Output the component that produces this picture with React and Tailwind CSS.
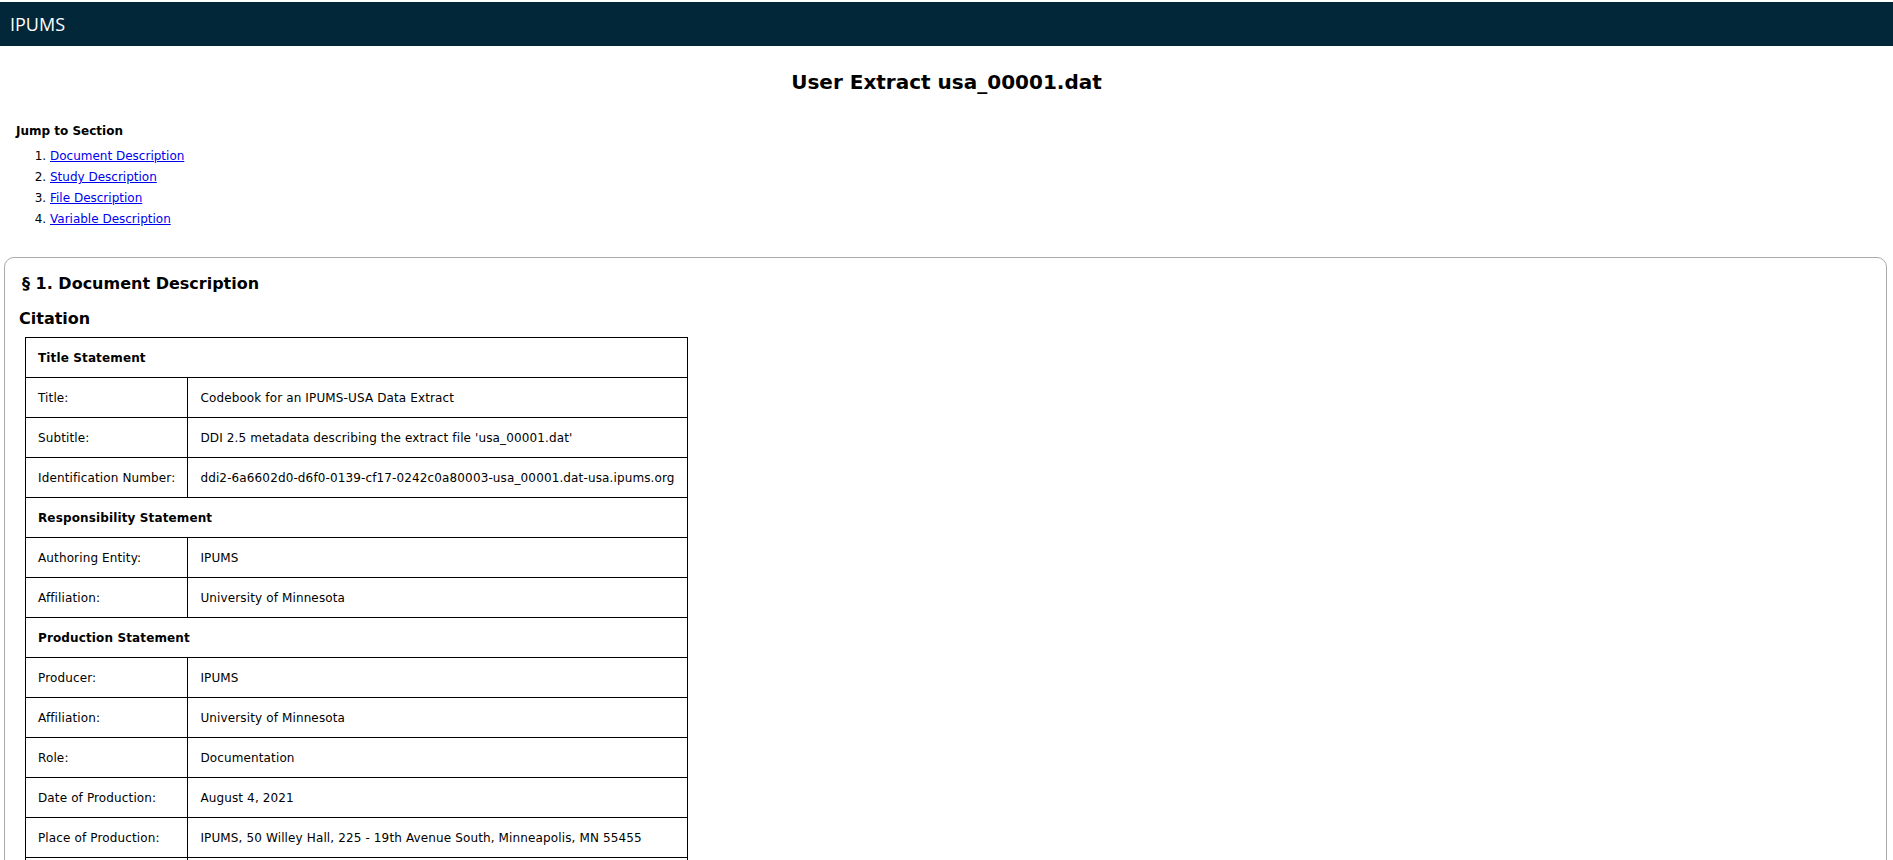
import React from "react";

const rows = [
  { head: "Title Statement" },
  { k: "Title:", v: "Codebook for an IPUMS-USA Data Extract" },
  { k: "Subtitle:", v: "DDI 2.5 metadata describing the extract file 'usa_00001.dat'" },
  { k: "Identification Number:", v: "ddi2-6a6602d0-d6f0-0139-cf17-0242c0a80003-usa_00001.dat-usa.ipums.org" },
  { head: "Responsibility Statement" },
  { k: "Authoring Entity:", v: "IPUMS" },
  { k: "Affiliation:", v: "University of Minnesota" },
  { head: "Production Statement" },
  { k: "Producer:", v: "IPUMS" },
  { k: "Affiliation:", v: "University of Minnesota" },
  { k: "Role:", v: "Documentation" },
  { k: "Date of Production:", v: "August 4, 2021" },
  { k: "Place of Production:", v: "IPUMS, 50 Willey Hall, 225 - 19th Avenue South, Minneapolis, MN 55455" },
  { k: "Copyright:", v: "IPUMS, University of Minnesota" },
  { k: "Software:", v: "IPUMS Extract System" },
];

const links = ["Document Description", "Study Description", "File Description", "Variable Description"];

export default function App() {
  return (
    <div className="min-h-screen bg-white text-black font-['DejaVu_Sans',Verdana,sans-serif] pt-[2px]">
      <header className="h-[44px] bg-[#022739] text-white flex items-center px-[10px] font-['Open_Sans',sans-serif] text-[18px]">
        IPUMS
      </header>
      <h1 className="mt-[24px] text-center font-bold text-[20px] leading-[24px]">User Extract usa_00001.dat</h1>
      <div className="mt-[30px] px-[16px]">
        <div className="font-bold text-[12px] leading-[14px]">Jump to Section</div>
        <ol className="mt-[8px] list-decimal pl-[34px] text-[12px] leading-[21px]">
          {links.map((l) => (
            <li key={l}>
              <a href="#" className="text-[#0000ee] underline">{l}</a>
            </li>
          ))}
        </ol>
      </div>
      <section className="mt-[27px] mx-[4px] w-[1883px] border border-[#aaaaaa] rounded-[10px] px-[14px] pt-[16px] pb-[20px]">
        <h2 className="ml-[3px] font-bold text-[16px] leading-[19px]">§ 1. Document Description</h2>
        <h3 className="mt-[16px] font-bold text-[16px] leading-[19px]">Citation</h3>
        <table className="mt-[9px] ml-[6px] border-collapse text-[12px] leading-[14px] tracking-[0.13px] whitespace-nowrap">
          <tbody>
            {rows.map((r, i) =>
              r.head ? (
                <tr key={i}>
                  <td colSpan={2} className="h-[40px] py-0 border border-black px-[12px] font-bold">{r.head}</td>
                </tr>
              ) : (
                <tr key={i}>
                  <td className="h-[40px] py-0 border border-black px-[12px] w-[162px]">{r.k}</td>
                  <td className="h-[40px] py-0 border border-black px-[12px]">{r.v}</td>
                </tr>
              )
            )}
          </tbody>
        </table>
      </section>
    </div>
  );
}
